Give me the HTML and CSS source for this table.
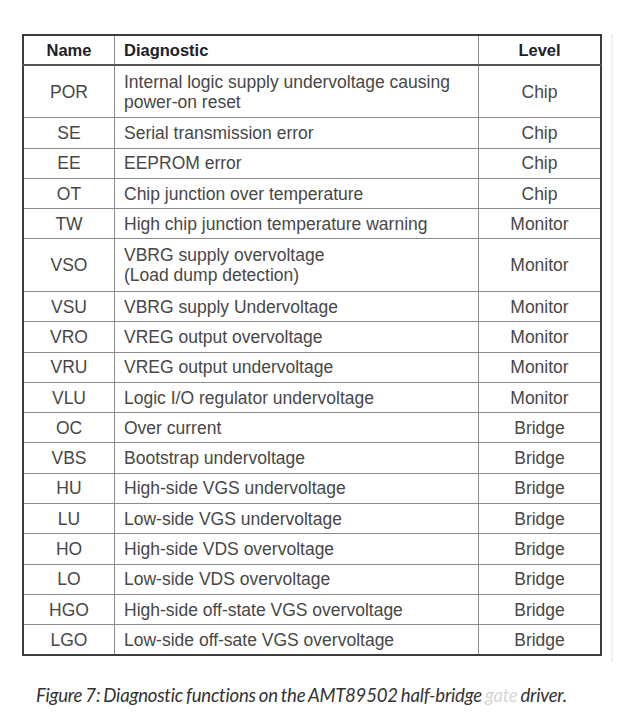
FILE: index.html
```html
<!DOCTYPE html>
<html>
<head>
<meta charset="utf-8">
<link rel="stylesheet" href="styles.css">
</head>
<body>
<div class="figure">
  <div class="frame">
    <table class="diag">
      <thead>
        <tr><th class="c-name">Name</th><th class="c-diag">Diagnostic</th><th class="c-level">Level</th></tr>
      </thead>
      <tbody>
        <tr class="tall"><td class="c-name">POR</td><td class="c-diag">Internal logic supply undervoltage causing<br>power-on reset</td><td class="c-level">Chip</td></tr>
        <tr><td class="c-name">SE</td><td class="c-diag">Serial transmission error</td><td class="c-level">Chip</td></tr>
        <tr><td class="c-name">EE</td><td class="c-diag">EEPROM error</td><td class="c-level">Chip</td></tr>
        <tr><td class="c-name">OT</td><td class="c-diag">Chip junction over temperature</td><td class="c-level">Chip</td></tr>
        <tr><td class="c-name">TW</td><td class="c-diag">High chip junction temperature warning</td><td class="c-level">Monitor</td></tr>
        <tr class="tall"><td class="c-name">VSO</td><td class="c-diag">VBRG supply overvoltage<br>(Load dump detection)</td><td class="c-level">Monitor</td></tr>
        <tr><td class="c-name">VSU</td><td class="c-diag">VBRG supply Undervoltage</td><td class="c-level">Monitor</td></tr>
        <tr><td class="c-name">VRO</td><td class="c-diag">VREG output overvoltage</td><td class="c-level">Monitor</td></tr>
        <tr><td class="c-name">VRU</td><td class="c-diag">VREG output undervoltage</td><td class="c-level">Monitor</td></tr>
        <tr><td class="c-name">VLU</td><td class="c-diag">Logic I/O regulator undervoltage</td><td class="c-level">Monitor</td></tr>
        <tr><td class="c-name">OC</td><td class="c-diag">Over current</td><td class="c-level">Bridge</td></tr>
        <tr><td class="c-name">VBS</td><td class="c-diag">Bootstrap undervoltage</td><td class="c-level">Bridge</td></tr>
        <tr><td class="c-name">HU</td><td class="c-diag">High-side VGS undervoltage</td><td class="c-level">Bridge</td></tr>
        <tr><td class="c-name">LU</td><td class="c-diag">Low-side VGS undervoltage</td><td class="c-level">Bridge</td></tr>
        <tr><td class="c-name">HO</td><td class="c-diag">High-side VDS overvoltage</td><td class="c-level">Bridge</td></tr>
        <tr><td class="c-name">LO</td><td class="c-diag">Low-side VDS overvoltage</td><td class="c-level">Bridge</td></tr>
        <tr><td class="c-name">HGO</td><td class="c-diag">High-side off-state VGS overvoltage</td><td class="c-level">Bridge</td></tr>
        <tr><td class="c-name">LGO</td><td class="c-diag">Low-side off-sate VGS overvoltage</td><td class="c-level">Bridge</td></tr>
      </tbody>
    </table>
  </div>
  <p class="caption">Figure 7: Diagnostic functions on the AMT89502 half-bridge <span class="faded">gate</span> driver.</p>
</div>
</body>
</html>
```

FILE: styles.css
```css
html, body {
  margin: 0;
  padding: 0;
  background: #ffffff;
}

.figure {
  width: 620px;
  height: 715px;
  padding-top: 34px;
  box-sizing: border-box;
  overflow: hidden;
}

.frame {
  margin-left: 22px;
  width: 589px;
  border-right: 2px solid #f1f1f1;
  padding-bottom: 6px;
}

.diag {
  border-collapse: collapse;
  width: 580px;
  table-layout: fixed;
  border: 2px solid #3c3c3c;
  font-family: "Liberation Sans", Arial, sans-serif;
  font-size: 17.5px;
  color: #474747;
}

.diag tr {
  height: 30.3px;
}

.diag tr.tall {
  height: 52.5px;
}

.diag th,
.diag td {
  border: 1px solid #8c8c8c;
  padding: 0;
  line-height: 20px;
  vertical-align: middle;
}

.diag th {
  font-size: 16.5px;
  font-weight: bold;
  color: #20202a;
  border-bottom: 2px solid #555;
}

.c-name {
  width: 90px;
  text-align: center;
}

.c-diag {
  width: 354px;
  text-align: left;
  padding-left: 9px !important;
}

.c-level {
  text-align: center;
}

.caption {
  margin: 22px 0 0 36px;
  font-family: Lato, "Open Sans", sans-serif;
  font-style: italic;
  font-size: 18.6px;
  line-height: 22px;
  color: #333333;
  letter-spacing: -0.25px;
  word-spacing: -1px;
}

.faded {
  color: #d6d6d6;
}
```
